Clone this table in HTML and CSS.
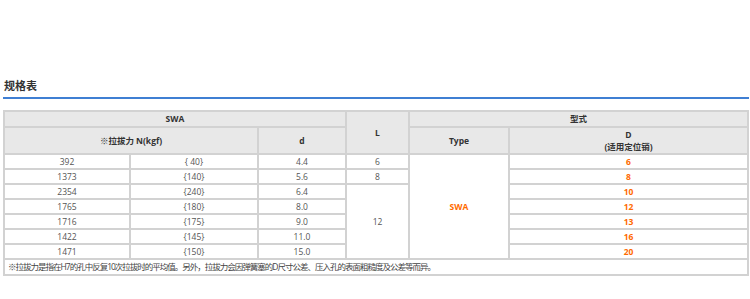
FILE: index.html
```html
<!DOCTYPE html>
<html lang="zh">
<head>
<meta charset="utf-8">
<link rel="stylesheet" href="styles.css">
</head>
<body>
<div class="section">
  <h2 class="title">规格表</h2>
  <table class="spec">
    <colgroup>
      <col class="c1"><col class="c2"><col class="c3"><col class="c4"><col class="c5"><col class="c6">
    </colgroup>
    <thead>
      <tr class="h1">
        <th colspan="3">SWA</th>
        <th rowspan="2">L</th>
        <th colspan="2">型式</th>
      </tr>
      <tr class="h2">
        <th colspan="2">※拉拔力 N(kgf)</th>
        <th>d</th>
        <th>Type</th>
        <th>D<br>(适用定位销)</th>
      </tr>
    </thead>
    <tbody>
      <tr><td>392</td><td>{ 40}</td><td>4.4</td><td>6</td><td rowspan="7" class="hl">SWA</td><td class="hl">6</td></tr>
      <tr><td>1373</td><td>{140}</td><td>5.6</td><td>8</td><td class="hl">8</td></tr>
      <tr><td>2354</td><td>{240}</td><td>6.4</td><td rowspan="5">12</td><td class="hl">10</td></tr>
      <tr><td>1765</td><td>{180}</td><td>8.0</td><td class="hl">12</td></tr>
      <tr><td>1716</td><td>{175}</td><td>9.0</td><td class="hl">13</td></tr>
      <tr><td>1422</td><td>{145}</td><td>11.0</td><td class="hl">16</td></tr>
      <tr><td>1471</td><td>{150}</td><td>15.0</td><td class="hl">20</td></tr>
      <tr class="note"><td colspan="6">※拉拔力是指在H7的孔中反复10次拉拔时的平均值。另外，拉拔力会因弹簧塞的D尺寸公差、压入孔的表面粗糙度及公差等而异。</td></tr>
    </tbody>
  </table>
</div>
</body>
</html>
```
FILE: styles.css
```css
html, body {
  margin: 0;
  padding: 0;
  background: #fff;
}
body {
  font-family: "Open Sans", "Noto Sans CJK SC", sans-serif;
  color: #444;
}
.section {
  width: 746px;
  padding-left: 3px;
}
.title {
  margin: 0;
  padding: 77px 0 4px 1px;
  font-family: "Noto Sans CJK SC", sans-serif;
  font-size: 11px;
  line-height: 16px;
  font-weight: 700;
  color: #333;
  border-bottom: 2px solid #3f7fd3;
}
.spec {
  margin-top: 11px;
  width: 746px;
  table-layout: fixed;
  border-collapse: separate;
  border-spacing: 0;
  border: 1px solid #d2d2d2;
  font-size: 8.5px;
}
.c1 { width: 126px; }
.c2 { width: 128px; }
.c3 { width: 88px; }
.c4 { width: 63px; }
.c5 { width: 100px; }
.c6 { width: 239px; }
.spec th, .spec td {
  border: 1px solid #d2d2d2;
  padding: 0;
  text-align: center;
  vertical-align: middle;
  line-height: 12px;
  overflow: hidden;
  white-space: nowrap;
}
.spec th {
  background: #e8e8e8;
  color: #333;
  font-weight: 700;
}
.spec tr.h1 { height: 16px; }
.spec tr.h2 { height: 27px; }
.spec tbody tr { height: 15px; }
.spec td { color: #555; }
.spec td.hl {
  color: #ff6a00;
  font-weight: 700;
}
.spec tr.note { height: 16px; }
.spec tr.note td {
  text-align: left;
  padding-left: 3px;
  color: #444;
  letter-spacing: -1px;
}
```
